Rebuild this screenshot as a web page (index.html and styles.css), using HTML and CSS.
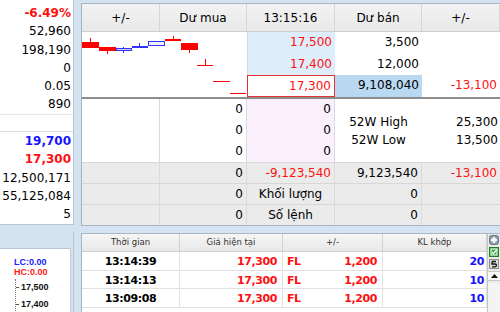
FILE: index.html
```html
<!DOCTYPE html>
<html lang="vi">
<head>
  <meta charset="UTF-8" />
  <title>Bảng giá</title>
  <link rel="stylesheet" href="styles.css">
</head>
<body>
  <div class="screen">
    <div class="side">
      <div class="quote">
        <div class="q red b">-6.49%</div>
        <div class="q">52,960</div>
        <div class="q">198,190</div>
        <div class="q">0</div>
        <div class="q">0.05</div>
        <div class="q">890</div>
        <div class="q sep"></div>
        <div class="q blue b">19,700</div>
        <div class="q red b">17,300</div>
        <div class="q">12,500,171</div>
        <div class="q">55,125,084</div>
        <div class="q">5</div>
      </div>
      <div class="mini">
        <div class="mini-box">
          <div class="lim lc">LC:0.00</div>
          <div class="lim hc">HC:0.00</div>
          <div class="axis">
            <div class="tick">17,500</div>
            <div class="tick">17,400</div>
          </div>
        </div>
      </div>
    </div>

    <div class="main">
      <div class="depth">
        <div class="cols head">
          <div>+/-</div>
          <div>Dư mua</div>
          <div>13:15:16</div>
          <div>Dư bán</div>
          <div>+/-</div>
        </div>

        <div class="cols top">
          <div class="chart">
            <svg width="165" height="65" viewBox="0 0 165 65" shape-rendering="crispEdges">
              <g fill="#ff0000">
                <rect x="8" y="6" width="1" height="4"/>
                <rect x="0" y="10" width="17" height="6"/>
                <rect x="25" y="19" width="1" height="3"/>
                <rect x="17" y="15" width="17" height="4"/>
                <rect x="91" y="4" width="1" height="3"/>
                <rect x="83" y="7" width="16" height="2"/>
                <rect x="107" y="18" width="1" height="3"/>
                <rect x="99" y="11" width="17" height="7"/>
                <rect x="123" y="27" width="1" height="6"/>
                <rect x="115" y="33" width="16" height="1"/>
                <rect x="131" y="49" width="17" height="1"/>
                <rect x="148" y="61" width="16" height="1"/>
              </g>
              <g fill="#3434ff">
                <rect x="41" y="15" width="1" height="6"/>
                <rect x="57" y="11" width="1" height="5"/>
                <rect x="50" y="14" width="16" height="2"/>
              </g>
              <rect x="34" y="16" width="15" height="2" fill="#c9c9ff" stroke="#3434ff"/>
              <rect x="66" y="9" width="16" height="4" fill="#f0f0ff" stroke="#3434ff"/>
            </svg>
          </div>
          <div class="cell bid red">17,500</div>
          <div class="cell">3,500</div>
          <div class="cell"></div>
          <div class="cell bid red">17,400</div>
          <div class="cell">12,000</div>
          <div class="cell"></div>
          <div class="cell bid cur red">17,300</div>
          <div class="cell hi">9,108,040</div>
          <div class="cell red">-13,100</div>
        </div>

        <div class="cols mid">
          <div class="blank span3"></div>
          <div class="cell line">0</div>
          <div class="cell pink">0</div>
          <div class="wk span3">
            <div>52W High</div>
            <div>52W Low</div>
          </div>
          <div class="wk wkv span3">
            <div>25,300</div>
            <div>13,500</div>
          </div>
          <div class="cell line">0</div>
          <div class="cell pink">0</div>
          <div class="cell line">0</div>
          <div class="cell pink">0</div>
        </div>

        <div class="cols sum">
          <div class="cell line"></div>
          <div class="cell line">0</div>
          <div class="cell line red">-9,123,540</div>
          <div class="cell line">9,123,540</div>
          <div class="cell red">-13,100</div>
          <div class="cell line"></div>
          <div class="cell line">0</div>
          <div class="cell line label">Khối lượng</div>
          <div class="cell line">0</div>
          <div class="cell"></div>
          <div class="cell line"></div>
          <div class="cell line">0</div>
          <div class="cell line label">Số lệnh</div>
          <div class="cell line">0</div>
          <div class="cell"></div>
        </div>
      </div>

      <div class="trades">
        <div class="tlist">
          <div class="trow thead">
            <div>Thời gian</div>
            <div>Giá hiện tại</div>
            <div>+/-</div>
            <div>KL khớp</div>
          </div>
          <div class="trow">
            <div class="t-time">13:14:39</div>
            <div class="t-price">17,300</div>
            <div class="t-chg"><span>FL</span><span>1,200</span></div>
            <div class="t-vol">20</div>
          </div>
          <div class="trow">
            <div class="t-time">13:14:13</div>
            <div class="t-price">17,300</div>
            <div class="t-chg"><span>FL</span><span>1,200</span></div>
            <div class="t-vol">10</div>
          </div>
          <div class="trow">
            <div class="t-time">13:09:08</div>
            <div class="t-price">17,300</div>
            <div class="t-chg"><span>FL</span><span>1,200</span></div>
            <div class="t-vol">10</div>
          </div>
          <div class="trow"></div>
        </div>
        <div class="sbar">
          <svg width="10" height="10" viewBox="0 0 10 10">
            <rect x="0.5" y="0.5" width="9" height="9" rx="2" fill="#8e9aa6" stroke="#6d7884"/>
            <path d="M5 1.5 L7 3.5 H5.7 V4.3 H6.5 V3 L8.5 5 L6.5 7 V5.7 H5.7 V6.5 H7 L5 8.5 L3 6.5 H4.3 V5.7 H3.5 V7 L1.5 5 L3.5 3 V4.3 H4.3 V3.5 H3 Z" fill="#fff"/>
          </svg>
          <svg width="10" height="10" viewBox="0 0 10 10">
            <rect x="0.5" y="0.5" width="9" height="9" fill="#32a83a" stroke="#1f7a26"/>
            <rect x="2" y="2" width="6" height="6" fill="none" stroke="#fff"/>
            <path d="M3 5 L4.5 6.5 L7.5 3" fill="none" stroke="#fff" stroke-width="1.2"/>
          </svg>
          <svg width="10" height="10" viewBox="0 0 10 10">
            <rect x="0.5" y="0.5" width="9" height="9" fill="#dcdcdc" stroke="#8c8c8c"/>
            <path d="M3 2.5 H7 M3 2.5 V5 H6 Q7.5 5 7.5 6.3 Q7.5 7.8 6 7.8 H3" fill="none" stroke="#111" stroke-width="1.3"/>
          </svg>
          <div class="sup">
            <svg width="7" height="4" viewBox="0 0 7 4"><path d="M0 4 L3.5 0 L7 4 Z" fill="#111"/></svg>
          </div>
          <div class="track"></div>
        </div>
      </div>
    </div>
  </div>
</body>
</html>
```

FILE: styles.css
```css
body {
  margin: 0;
  background-color: #d5e2ef;
  font-family: "DejaVu Sans", Verdana, sans-serif;
  font-size: 12px;
  color: #000;
  overflow: hidden;
}
.screen {
  display: flex;
  gap: 7px;
  width: 500px;
  height: 312px;
}
.red { color: #ff1010; }
.blue { color: #1414ff; }
.b { font-weight: bold; }

/* left column */
.side {
  width: 74px;
  flex: none;
  display: flex;
  flex-direction: column;
}
.quote {
  background-color: #fff;
  border-right: 1px solid #b6c4d3;
  border-bottom: 1px solid #b6c4d3;
  padding-top: 4px;
}
.q {
  height: 18.3px;
  line-height: 18.3px;
  text-align: right;
  padding-right: 2px;
  white-space: nowrap;
}
.q.sep {
  box-sizing: border-box;
  border-top: 1px solid #e6e6e6;
  border-bottom: 1px solid #dcdcdc;
}
.mini {
  flex: 1;
  margin-top: 7px;
  padding-top: 16px;
  border-right: 1px solid #b6c4d3;
}
.mini-box {
  height: 100%;
  margin-right: 2px;
  background-color: #fff;
  border-top: 1px solid #b9c5d2;
  border-right: 1px solid #c0cbd6;
  padding: 8px 0 0 14px;
  font-family: "Liberation Sans", Arial, sans-serif;
  font-size: 9px;
  font-weight: bold;
}
.lim {
  line-height: 10px;
}
.lc { color: #1a1aff; }
.hc { color: #ff1a1a; }
.axis {
  margin-top: 2px;
  margin-left: 1px;
  border-left: 1px dotted #777;
  color: #111;
}
.tick {
  line-height: 17px;
  padding-left: 5px;
  position: relative;
}
.tick::before {
  content: "";
  position: absolute;
  left: 0;
  top: 8px;
  width: 3px;
  border-top: 1px solid #555;
}

/* right column */
.main {
  width: 419px;
  flex: none;
  display: flex;
  flex-direction: column;
}
.depth {
  margin-top: 3px;
  background-color: #fff;
  border-top: 1px solid #a9b6c4;
  border-left: 1px solid #a3b1c0;
  border-bottom: 1px solid #a9b6c4;
}
.cols {
  display: grid;
  grid-template-columns: 78px 87px 88px 87px 78px;
}
.head {
  height: 28px;
  background: linear-gradient(#f2f2f2, #e9e9e9);
  border-bottom: 1px solid #cfcfcf;
  box-sizing: border-box;
}
.head div {
  display: flex;
  align-items: center;
  justify-content: center;
  border-right: 1px solid #d6d6d6;
  padding-top: 1px;
}
.cell {
  box-sizing: border-box;
  text-align: right;
  padding-right: 3px;
  white-space: nowrap;
}
.top {
  grid-template-rows: 22px 21px 22px;
  border-bottom: 2px solid #8d8d8d;
}
.top .cell {
  line-height: 21.6px;
}
.chart {
  grid-column: 1 / 3;
  grid-row: 1 / 4;
}
.chart svg {
  display: block;
}
.bid {
  background-color: #ddedfa;
  border-left: 1px solid #d8d8d8;
}
.bid.cur {
  background-color: #fff;
  border: 1px solid #e23232;
  line-height: 20px;
}
.hi {
  background-color: #b9d8f1;
}
.mid {
  grid-template-rows: repeat(3, 21px);
}
.mid .cell,
.sum .cell {
  line-height: 21px;
}
.span3 {
  grid-row: span 3;
}
.blank {
  border-right: 1px solid #dadada;
}
.line {
  border-right: 1px solid #dadada;
}
.pink {
  background-color: #fcf0fc;
  border-right: 1px solid #dadada;
}
.wk {
  display: flex;
  flex-direction: column;
  justify-content: center;
  align-items: center;
  line-height: 18px;
  padding-top: 1px;
}
.wkv {
  align-items: flex-end;
  padding-right: 2px;
}
.sum {
  grid-template-rows: repeat(3, 21px);
  background-color: #ebebeb;
}
.sum .cell {
  border-top: 1px solid #d7d7d7;
  line-height: 20px;
}
.sum .label {
  text-align: center;
  padding-right: 0;
}

/* trades */
.trades {
  flex: 1;
  margin-top: 7px;
  display: flex;
  background-color: #fff;
  border-top: 1px solid #a9b6c4;
  border-left: 1px solid #a3b1c0;
}
.tlist {
  flex: 1;
}
.trow {
  display: grid;
  grid-template-columns: 98px 103px 100px 104px;
  height: 18.7px;
  box-sizing: border-box;
  border-bottom: 1px solid #e0e0e0;
  font-size: 11px;
  font-weight: bold;
  letter-spacing: -0.4px;
  line-height: 19px;
}
.trow div {
  border-right: 1px solid #e3e3e3;
  white-space: nowrap;
}
.thead {
  height: 18px;
  background: linear-gradient(#f6f6f6, #e8e8e8);
  border-bottom: 1px solid #cfcfcf;
  font-size: 8.5px;
  font-weight: normal;
  letter-spacing: 0;
  color: #333;
  line-height: 17px;
}
.thead div {
  text-align: center;
  border-right-color: #d2d2d2;
}
.t-time {
  text-align: center;
}
.t-price {
  text-align: right;
  padding-right: 5px;
  color: #ff1010;
}
.t-chg {
  display: flex;
  justify-content: space-between;
  padding: 0 5px 0 4px;
  color: #ff1010;
}
.t-vol {
  text-align: right;
  padding-right: 2px;
  color: #1414ff;
}
.sbar {
  width: 12px;
  background-color: #ececec;
  border-left: 1px solid #c6c6c6;
  display: flex;
  flex-direction: column;
  align-items: center;
  gap: 2px;
  padding-top: 1px;
}
.sbar svg {
  display: block;
}
.sup {
  width: 12px;
  height: 8px;
  background-color: #fafafa;
  border-top: 1px solid #c8c8c8;
  border-bottom: 1px solid #c8c8c8;
  display: flex;
  align-items: center;
  justify-content: center;
}
.track {
  flex: 1;
  width: 12px;
  background-color: #f4f4f4;
}
```
